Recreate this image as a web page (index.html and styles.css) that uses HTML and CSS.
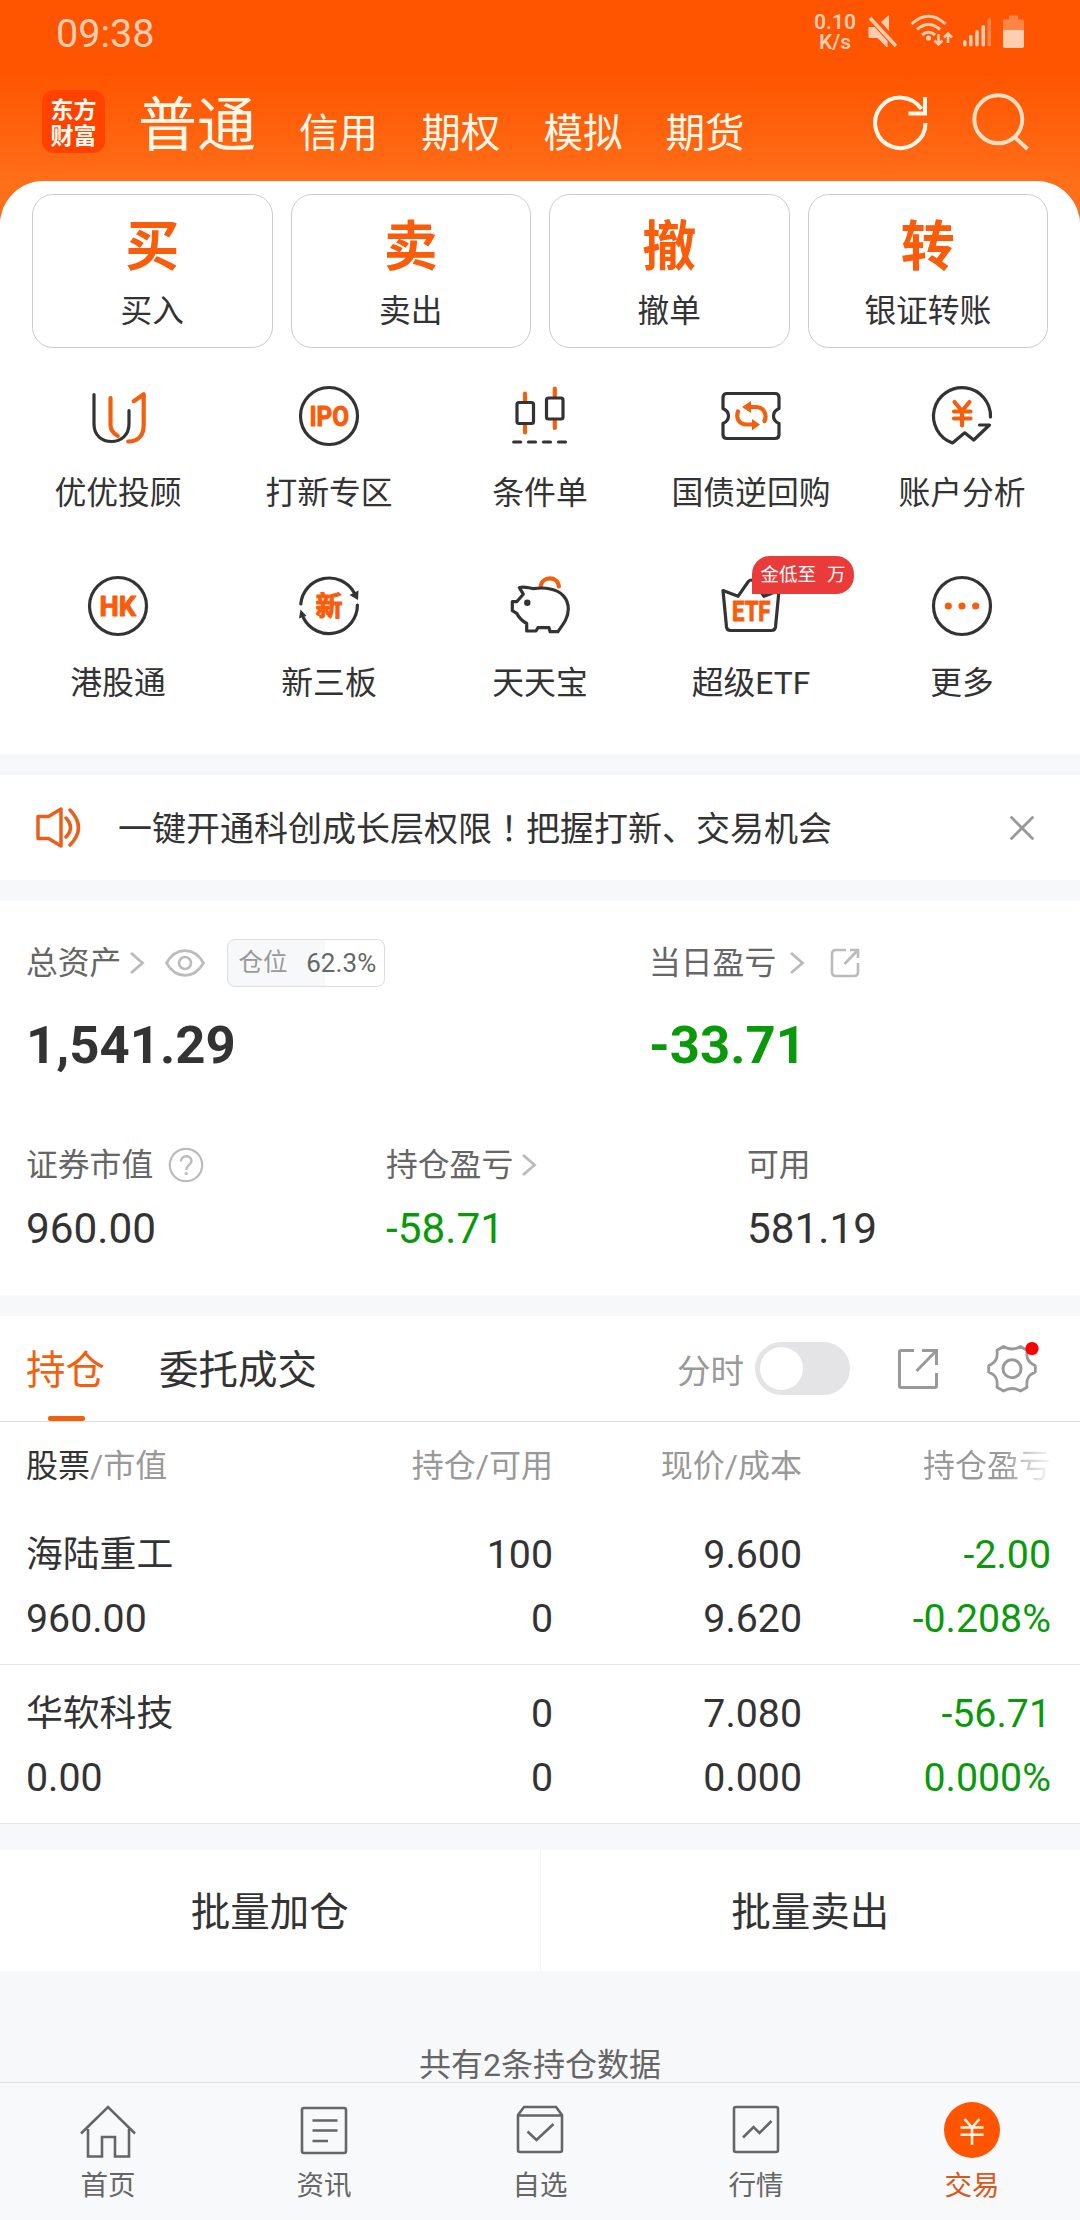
FILE: index.html
```html
<!DOCTYPE html>
<html lang="zh-CN">
<head>
<meta charset="utf-8">
<title>交易</title>
<link rel="stylesheet" href="styles.css">
</head>
<body>
<div class="app">
  <header class="top">
    <div class="status">
      <span class="clock">09:38</span>
      <div class="status-right">
        <span class="speed">0.10<br>K/s</span>
        <svg class="status-icons" width="160" height="36" viewBox="866 13 160 36">
          <g fill="#ffcdb0">
            <path d="M881 22l8-7v16z"/>
            <path d="M868.500 27h6l13 14v6h-1l-9-9h-7.500q-1.500 0-1.500-1.500z"/>
            <path d="M872 16l26 28" stroke="#ff5500" stroke-width="3"/>
            <path d="M870 18l26 28" stroke="#ffcdb0" stroke-width="3.500"/>
            <circle cx="928.500" cy="38" r="2.600"/>
            <rect x="963" y="40" width="3.500" height="6.500" rx="1.700"/>
            <rect x="969" y="35" width="3.500" height="11.500" rx="1.700"/>
            <rect x="975.200" y="30" width="3.500" height="16.500" rx="1.700"/>
            <rect x="981.500" y="25" width="3.500" height="21.500" rx="1.700"/>
            <rect x="987.500" y="18" width="3.500" height="28.500" rx="1.700" opacity=".4"/>
            <path d="M1009 15.500h9v4h4.500q1.500 0 1.500 1.500v9h-21v-9q0-1.500 1.500-1.500h4.500z" opacity=".4"/>
            <path d="M1003 30h21v16q0 2-2 2h-17q-2 0-2-2z"/>
          </g>
          <g fill="none" stroke="#ffcdb0" stroke-width="3">
            <path d="M911.500 24q17-15.500 34 0M917 29.500q11.500-10 23 0M922 35q6.500-5.500 13 0"/>
            <path d="M938.500 34v10M934.500 40.500l4 4 4-4M948 43v-9M944 37.500l4-4 4 4" stroke-width="2.500"/>
          </g>
        </svg>
      </div>
    </div>
    <nav class="markets">
      <div class="logo">东方<br>财富</div>
      <span class="market market-active">普通</span>
      <span class="market">信用</span>
      <span class="market">期权</span>
      <span class="market">模拟</span>
      <span class="market">期货</span>
      <svg class="head-icons" width="164" height="64" viewBox="870 92 164 64" fill="none" stroke="#fff8e8" stroke-width="4">
        <path d="M925.500 123a25.200 25.200 0 1 1-4-13.800"/>
        <path d="M925 97v16.500h-16.500"/>
        <g stroke="#ffe0c4"><circle cx="998.300" cy="119.300" r="24"/><path d="M1014.500 137l13 12"/></g>
      </svg>
    </nav>
  </header>

  <main>
    <section class="sheet">
      <div class="cards">
        <div class="card"><b>买</b><span>买入</span></div>
        <div class="card"><b>卖</b><span>卖出</span></div>
        <div class="card"><b>撤</b><span>撤单</span></div>
        <div class="card"><b>转</b><span>银证转账</span></div>
      </div>
      <div class="tools">
        <div class="tool">
          <svg viewBox="0 0 64 64"><path class="ink" d="M8 10.500V40c0 11.500 8 17.500 17.500 17.500S43 51 43 40V26.500"/><path class="hot" d="M24.500 14v27c0 5 3 8.500 7.300 11M47.700 17.300l10-7V41c0 10.500-5.500 16.500-15.500 16.500"/></svg>
          <span>优优投顾</span>
        </div>
        <div class="tool">
          <svg viewBox="0 0 64 64"><circle class="ink" cx="32" cy="32" r="28.500"/><text class="mark" x="12.500" y="41.500" font-size="27" textLength="39.500" lengthAdjust="spacingAndGlyphs">IPO</text></svg>
          <span>打新专区</span>
        </div>
        <div class="tool">
          <svg viewBox="0 0 64 64"><path class="hot" d="M17 9.500V18M17 41v7.500M46.800 4.500V13M46.800 37v7"/><path class="ink" d="M5.700 58h7M20.500 58h7M35.500 58h7M50.500 58h7"/><rect class="ink" x="9" y="18.500" width="16.500" height="21" rx="2"/><rect class="ink" x="38.500" y="14" width="16.500" height="21" rx="2"/></svg>
          <span>条件单</span>
        </div>
        <div class="tool">
          <svg viewBox="0 0 64 64"><path class="ink" d="M8 9.500h48q4 0 4 4v11q-5.500 2.500-5.500 7.500t5.500 7.500v11q0 4-4 4H8q-4 0-4-4v-11q5.500-2.500 5.500-7.500T4 24.500v-11q0-4 4-4z"/><path class="hot" d="M19 27.500c-2.500 7 1.500 13 8.500 13h8M30 23h7c7.500 0 11.500 7.500 8.500 14"/><path fill="#f2600f" d="M23 23l9-6v12zM41 40.500l-8-5.500v11.500z"/></svg>
          <span>国债逆回购</span>
        </div>
        <div class="tool">
          <svg viewBox="0 0 64 64"><path class="ink" d="M60.500 33A28.500 28.500 0 1 0 22.500 59L34.700 48.800 43.700 56 59.500 41H49.500"/><path class="hot" d="M24.500 18l7.500 9 7.500-9M32 27v14.500M24 27.500h16.500M24 34.500h16.500"/></svg>
          <span>账户分析</span>
        </div>
        <div class="tool">
          <svg viewBox="0 0 64 64"><circle class="ink" cx="32" cy="32" r="28.500"/><text class="mark" x="13.500" y="41.500" font-size="27" textLength="36.500" lengthAdjust="spacingAndGlyphs">HK</text></svg>
          <span>港股通</span>
        </div>
        <div class="tool">
          <svg viewBox="0 0 64 64"><path class="ink" d="M3.800 30A28.500 28.500 0 0 1 57 18.500M60.400 31A28.500 28.500 0 0 1 6.500 44"/><path fill="#333" d="M52.500 21l9-4.500-.5 9.500zM2 44.500l1.500-9L9.500 42z"/><text class="mark" x="32" y="41.500" font-size="27" text-anchor="middle">新</text></svg>
          <span>新三板</span>
        </div>
        <div class="tool">
          <svg viewBox="0 0 64 64"><path class="hot" d="M32.700 12.500c1-10.500 17-11 18.200 0"/><path class="ink" d="M11.300 13.700c5-2 9 .5 14 1 5-.8 11-1.200 17 .3 11 2 18 9.500 18 20 0 9-5 15-10.500 22.700H42l-1-4H30l-2 3.300h-9.300V49.500c-4.500-2.500-8-6-10-10.200l-4.400-2.600v-9h4.400l6.600-7.500z"/><circle cx="19.300" cy="28.700" r="3.200" fill="#333"/></svg>
          <span>天天宝</span>
        </div>
        <div class="tool">
          <svg viewBox="0 0 64 64"><path class="ink" d="M4 16.500l15 5.800L29 8q3-4 6 0l10 14.300 15-5.800-3.500 36.500q-.5 3.500-4 3.500h-41q-3.500 0-4-3.500z"/><text class="mark" x="13" y="46.800" font-size="27" textLength="38.500" lengthAdjust="spacingAndGlyphs">ETF</text></svg>
          <i class="badge"><em>金低至</em><em>万</em></i>
          <span>超级ETF</span>
        </div>
        <div class="tool">
          <svg viewBox="0 0 64 64"><circle class="ink" cx="32" cy="32" r="28.500"/><g fill="#f2600f"><circle cx="18.300" cy="32" r="3.600"/><circle cx="32" cy="32" r="3.600"/><circle cx="45.700" cy="32" r="3.600"/></g></svg>
          <span>更多</span>
        </div>
      </div>
    </section>

    <section class="notice">
      <svg width="48" height="44" viewBox="0 0 48 44" fill="none" stroke="#e8601c" stroke-width="3.500" stroke-linejoin="round" stroke-linecap="round"><path d="M3 10.500h10.500L26 3v37L13.500 32.500H3zM31 12q9 9.500 0 19M35 4q17 17.500 0 35"/></svg>
      <p>一键开通科创成长层权限<span class="bang" lang="zh-TW">！</span>把握打新、交易机会</p>
      <svg class="close" width="24" height="24" viewBox="0 0 24 24" stroke="#999" stroke-width="2.800" stroke-linecap="round"><path d="M1.500 1.500l21 21M22.500 1.500l-21 21"/></svg>
    </section>

    <section class="assets">
      <div class="totals">
        <div class="total">
          <div class="label">总资产
            <svg class="chev" width="16" height="24" viewBox="0 0 16 24"><path d="M2 2l11.500 10L2 22"/></svg>
            <svg class="eye" width="40" height="28" viewBox="0 0 40 28" fill="none" stroke="#bbb" stroke-width="2.600"><path d="M1.500 14C11-2.500 29-2.500 38.500 14 29 30.500 11 30.500 1.500 14z"/><circle cx="20" cy="14" r="6"/></svg>
            <span class="ratio"><span>仓位</span><span>62.3%</span></span>
          </div>
          <div class="big">1,541.29</div>
        </div>
        <div class="total">
          <div class="label">当日盈亏
            <svg class="chev chev-far" width="16" height="24" viewBox="0 0 16 24"><path d="M2 2l11.500 10L2 22"/></svg>
            <svg class="share-small" width="30" height="30" viewBox="0 0 30 30" fill="none" stroke="#bbb" stroke-width="2.600"><path d="M16 2H6Q2 2 2 6v18q0 4 4 4h18q4 0 4-4V15M20 2h8v8M28 2L14.500 16"/></svg>
          </div>
          <div class="big fall">-33.71</div>
        </div>
      </div>
      <div class="details">
        <div><div class="label">证券市值
          <svg class="help" width="36" height="36" viewBox="0 0 36 36"><circle cx="18" cy="18" r="16.200" fill="none" stroke="#bbb" stroke-width="2.200"/><path d="M13 14.500c0-7 10.500-7 10.500-.5 0 4-5.200 4-5.200 9" fill="none" stroke="#bbb" stroke-width="2.400"/><circle cx="18.200" cy="26.500" r="1.600" fill="#bbb"/></svg></div>
          <div class="mid">960.00</div></div>
        <div><div class="label">持仓盈亏
          <svg class="chev" width="16" height="24" viewBox="0 0 16 24"><path d="M2 2l11.500 10L2 22"/></svg></div>
          <div class="mid fall">-58.71</div></div>
        <div><div class="label">可用</div><div class="mid">581.19</div></div>
      </div>
    </section>

    <section class="holdings">
      <div class="tabs">
        <span class="tab tab-active">持仓</span>
        <span class="tab">委托成交</span>
        <span class="switch-label">分时</span>
        <span class="switch"></span>
        <svg class="share" width="44" height="44" viewBox="0 0 44 44" fill="none" stroke="#999" stroke-width="3"><path d="M18 3.500H5q-1.500 0-1.500 1.500v34q0 1.500 1.500 1.500h34q1.500 0 1.500-1.500V26M26 3.500h14.500V18M40 4L20.500 24"/></svg>
        <svg class="gear" width="56" height="56" viewBox="0 0 56 56"><path fill="none" stroke="#999" stroke-width="2.800" stroke-linejoin="round" d="M19.500 5.500Q28 10.500 36.500 5.500L43 9.200C42 18 44.500 21.500 51.300 24.700V31C44.500 34 42 38 43 46.200L36.500 50Q28 45 19.500 50L13 46.200C14 38 11.500 34 4.700 31V24.700C11.500 21.500 14 18 13 9.200Z"/><circle cx="28" cy="27.700" r="9" fill="none" stroke="#999" stroke-width="3"/><circle cx="48" cy="7.500" r="6.600" fill="#f00"/></svg>
      </div>
      <div class="row head"><span><b>股票</b>/市值</span><span>持仓/可用</span><span>现价/成本</span><span class="fade">持仓盈亏</span></div>
      <div class="row stock">
        <span class="name">海陆重工</span><span>100</span><span>9.600</span><span class="fall">-2.00</span>
        <span>960.00</span><span>0</span><span>9.620</span><span class="fall">-0.208%</span>
      </div>
      <div class="row stock">
        <span class="name">华软科技</span><span>0</span><span>7.080</span><span class="fall">-56.71</span>
        <span>0.00</span><span>0</span><span>0.000</span><span class="fall">0.000%</span>
      </div>
    </section>

    <div class="batch"><span>批量加仓</span><span>批量卖出</span></div>
    <p class="summary">共有2条持仓数据</p>
  </main>

  <nav class="bottom">
    <div class="item"><svg viewBox="0 0 60 60"><path d="M3 33.500L30 7l27 26.500M10 29v27.500h14V37h13v19.500h14V29"/></svg><span>首页</span></div>
    <div class="item"><svg viewBox="0 0 60 60"><rect x="8" y="8" width="44" height="45" rx="2"/><path d="M18.500 20.500H43.500M18.500 30.500H43.500M18.500 41H34"/></svg><span>资讯</span></div>
    <div class="item"><svg viewBox="0 0 60 60"><path d="M8 15l6-8h32l6 8v35q0 2-2 2H10q-2 0-2-2zM8 15.500h44M17.500 31.500l9 8.500L43.500 24"/></svg><span>自选</span></div>
    <div class="item"><svg viewBox="0 0 60 60"><rect x="8" y="7" width="44" height="45" rx="2"/><path d="M17 37.500l10.500-10.500 6 6L45.500 21"/></svg><span>行情</span></div>
    <div class="item item-active"><svg viewBox="0 0 60 60"><circle cx="30" cy="30" r="28" fill="#f50" stroke="none"/><path d="M22.500 19l7.500 8.500 7.500-8.500M30 27v18M18.500 27.500h23M18.500 34.700h23" stroke="#fff4e6"/></svg><span>交易</span></div>
  </nav>
</div>
</body>
</html>
```
FILE: styles.css
```css
* { box-sizing: border-box; margin: 0; padding: 0; }

body {
  width: 1080px;
  background: #f7f8fa;
  color: #333;
  font-family: Roboto, "Noto Sans CJK SC", sans-serif;
  font-weight: 400;
}

svg { display: block; flex: none; }
i, em { font-style: normal; }
.fall { color: #0a990a; }

.app { display: flex; flex-direction: column; height: 2220px; overflow: hidden; }
main {
  z-index: 1;
  flex: 1;
  display: flex;
  flex-direction: column;
  min-height: 0;
  overflow: hidden;
  border-radius: 44px 44px 0 0;
  background: #f7f8fa;
}
main > * { flex: none; }

/* Header */
.top {
  flex: none;
  height: 225px;
  margin-bottom: -44px;
  background: linear-gradient(#ff5500 75px, #ff6f1a 185px);
  color: #fff8e8;
}
.status {
  display: flex;
  justify-content: space-between;
  height: 66px;
  padding: 0 54px 0 56px;
  color: #ffcdb0;
}
.clock { font-size: 39.500px; line-height: 67px; }
.status-right { display: flex; }
.speed {
  width: 44px;
  margin: 12px 9px 0 0;
  font-size: 21px;
  font-weight: 600;
  line-height: 20px;
  text-align: center;
}
.status-icons { margin-top: 13px; }
.markets { display: flex; height: 115px; padding-left: 42px; }
.logo {
  width: 63px;
  height: 63px;
  margin-top: 24px;
  padding-top: 5px;
  border-radius: 12px;
  background: #ff4200;
  font-family: "Noto Sans CJK SC", sans-serif;
  font-size: 23px;
  font-weight: 700;
  line-height: 26px;
  text-align: center;
  color: #fffaf0;
}
.market { width: 122.200px; font-size: 39.500px; line-height: 135px; white-space: nowrap; }
.market-active { width: 161px; margin-left: 33px; font-size: 59px; line-height: 120px; }
.head-icons { margin: 26px 0 0 82.200px; }

/* Shortcuts */
.sheet {
  height: 573px;
  padding-top: 13px;
  background: #fff;
}
.cards {
  display: grid;
  grid-template-columns: repeat(4, 1fr);
  gap: 18px;
  padding: 0 32px;
}
.card {
  display: flex;
  flex-direction: column;
  align-items: center;
  height: 154px;
  border: 1px solid #ccc;
  border-radius: 21px;
}
.card b {
  margin-top: 8px;
  font-family: "Noto Sans CJK SC", sans-serif;
  font-size: 54px;
  line-height: 80px;
  color: #f95c0a;
}
.card span { margin-top: 4px; font-size: 31.700px; line-height: 50px; }
.tools {
  display: grid;
  grid-template-columns: repeat(5, 211px);
  grid-auto-rows: 190px;
  justify-content: center;
  padding-top: 36px;
}
.tool { position: relative; display: flex; flex-direction: column; align-items: center; }
.tool svg { width: 64px; height: 64px; overflow: visible; }
.tool span { margin-top: 20px; font-size: 31.800px; line-height: 50px; }
.ink, .hot { fill: none; stroke: #333; stroke-width: 3.200; stroke-linecap: round; stroke-linejoin: round; }
.hot { stroke: #f2600f; stroke-width: 4.200; }
.mark {
  fill: #f95c0a;
  stroke: #f95c0a;
  stroke-width: 1;
  stroke-linejoin: round;
  font-family: Roboto, "Noto Sans CJK SC", sans-serif;
  font-weight: 700;
}
.badge {
  position: absolute;
  left: 106px;
  top: -18px;
  display: flex;
  gap: 11px;
  width: 102px;
  height: 38px;
  padding-left: 9px;
  border-radius: 18px 18px 18px 0;
  background: #ea3b3b;
  color: #fff;
  font-size: 18.500px;
  line-height: 38px;
  white-space: nowrap;
}

/* Notice */
.notice {
  display: flex;
  align-items: center;
  height: 105px;
  margin: 21px 0;
  padding: 0 46px 0 35px;
  background: #fff;
}
.notice p { margin-left: 35px; padding-top: 2px; font-size: 34px; line-height: 60px; }
.bang { font-family: "Noto Sans CJK TC", sans-serif; line-height: 1; }
.close { margin-left: auto; }

/* Assets */
.assets { height: 394px; padding: 36px 26px 0; background: #fff; }
.totals { display: grid; grid-template-columns: 623px 1fr; }
.label {
  display: flex;
  align-items: center;
  height: 52px;
  font-size: 31.800px;
  line-height: 52px;
  color: #666;
  white-space: nowrap;
}
.chev { margin-left: 8px; fill: none; stroke: #bbb; stroke-width: 2.800; }
.chev-far { margin-left: 13px; }
.eye { margin-left: 20px; }
.share-small { margin-left: 25px; }
.ratio {
  display: flex;
  justify-content: space-between;
  width: 158px;
  height: 48px;
  margin-left: 22px;
  padding: 0 8px 0 10px;
  border: 1px solid #ddd;
  border-radius: 8px;
  background: linear-gradient(90deg, #f7f8fa 62.300%, #fff 62.300%);
  font-size: 24.500px;
  line-height: 46px;
  color: #999;
}
.ratio span + span { font-size: 26px; letter-spacing: .1px; color: #666; }
.big { margin-top: 24px; font-size: 52.700px; font-weight: 700; line-height: 64px; }
.details { display: grid; grid-template-columns: 360px 361px 1fr; margin-top: 62px; }
.help { margin-left: 15px; }
.mid { margin-top: 11px; font-size: 42.300px; line-height: 54px; }

/* Holdings */
.holdings { margin-top: 21px; background: #fff; }
.tabs { display: flex; align-items: center; height: 106px; padding: 0 27px 0 26px; border-bottom: 1px solid #ddd; }
.tab { position: relative; height: 105px; padding-top: 4px; margin-right: 54px; font-size: 39.500px; line-height: 101px; }
.tab-active { color: #f2600f; }
.tab-active::after {
  content: "";
  position: absolute;
  left: 22px;
  bottom: 0;
  width: 37px;
  height: 5px;
  border-radius: 2px;
  background: #f2600f;
}
.switch-label { margin-left: auto; font-size: 33.500px; color: #999; }
.switch { display: flex; width: 95px; height: 53px; margin: 0 46px 0 11px; padding: 5px; border-radius: 27px; background: #e4e4e6; }
.switch::before { content: ""; width: 43px; height: 43px; border-radius: 50%; background: #fff; }
.share { margin-right: 44px; }
.gear { margin-right: 13px; }

.row { display: grid; grid-template-columns: 301px 226px 249px 249px; padding: 0 26px; }
.row > span { text-align: right; white-space: nowrap; }
.row > span:nth-child(4n + 1) { text-align: left; }
.head { height: 84px; font-size: 32px; line-height: 88px; color: #999; }
.head b { font-weight: 400; color: #333; }
.head .fade {
  background: linear-gradient(90deg, #999 200px, #fff 252px);
  background-clip: text;
  -webkit-background-clip: text;
  color: transparent;
}
.stock { height: 159px; padding-top: 17px; border-bottom: 1px solid #e8e8ea; font-size: 39.300px; line-height: 64px; grid-auto-rows: 64px; }
.stock .name { font-size: 36.800px; }

.batch { display: flex; height: 121px; margin-top: 26px; background: #fff; }
.batch span { flex: 1; padding-top: 4px; font-size: 39.500px; line-height: 117px; text-align: center; }
.batch span + span { border-left: 1px solid #f3f4f6; }
.summary { margin-top: 69px; font-size: 32px; line-height: 50px; text-align: center; color: #666; }

/* Bottom navigation */
.bottom {
  flex: none;
  display: grid;
  grid-template-columns: repeat(5, 1fr);
  height: 138px;
  border-top: 1px solid #e0e1e3;
  background: #f8f9fb;
  color: #666;
}
.item { display: flex; flex-direction: column; align-items: center; padding-top: 17px; }
.item svg { width: 60px; height: 60px; fill: none; stroke: #666; stroke-width: 2.600; }
.item span { margin-top: 6px; font-size: 27.500px; line-height: 40px; }
.item-active { color: #d9581a; }
```
